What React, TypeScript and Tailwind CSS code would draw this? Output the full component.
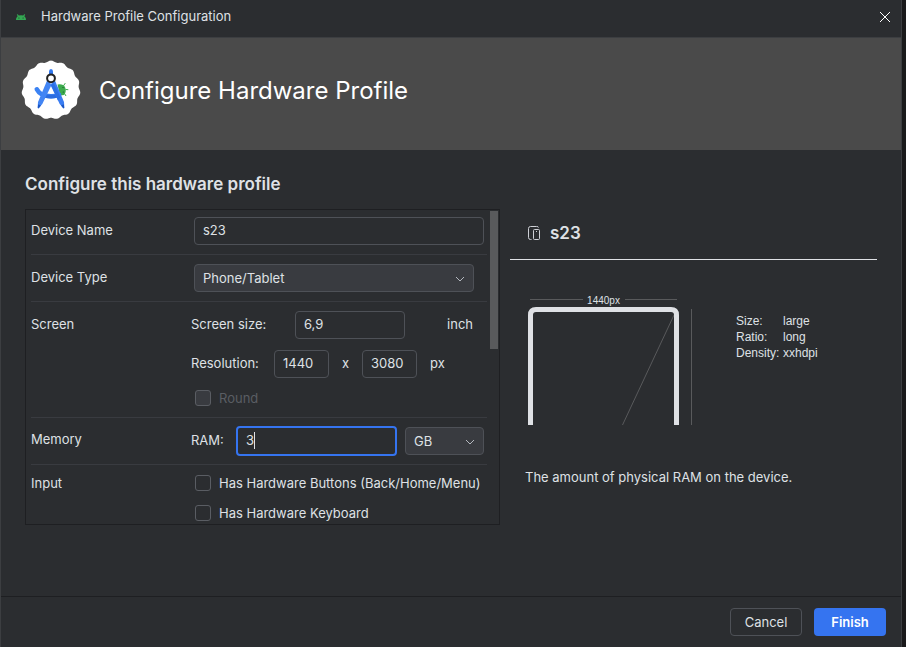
import { useId, type ReactNode } from 'react';

const controlBase =
  'h-7 rounded border border-[#4e5157] px-2 text-[#dfe1e5] outline-none';

function AndroidHead() {
  return (
    <svg className="h-3 w-3" viewBox="0 0 12 12" aria-hidden="true">
      <path
        d="M1 9a5 4.500 0 0 1 1.600-3.800L1.800 3.600l1-.4 1 1.400a6 6 0 0 1 4.400 0l1-1.400 1 .4-.8 1.600A5 4.500 0 0 1 11 9z"
        fill="#33a852"
      />
      <circle cx="3.900" cy="7" r=".6" fill="#2b2d30" />
      <circle cx="8.100" cy="7" r=".6" fill="#2b2d30" />
    </svg>
  );
}

function scallop(cx: number, cy: number, r: number, amp: number, lobes: number) {
  const points: string[] = [];
  for (let i = 0; i < 240; i++) {
    const a = (i / 240) * Math.PI * 2 - Math.PI / 2;
    const rr = r + amp * Math.cos(lobes * (a + Math.PI / 2));
    points.push(`${(cx + rr * Math.cos(a)).toFixed(2)},${(cy + rr * Math.sin(a)).toFixed(2)}`);
  }
  return points.join(' ');
}

function StudioLogo() {
  return (
    <svg className="size-[60px] shrink-0" viewBox="0 0 60 60" aria-hidden="true">
      <polygon points={scallop(30, 30, 28.6, 0.8, 15)} fill="#fff" />
      <path d="M36.500 24.500q5.500-1 7.500 2.500 2 4.500-1 8l-4 .5z" fill="#3dab4e" />
      <path d="M42.500 25.800l1.800-2.700M44.500 29.500l2.800.2M43.500 33.500l1.500 2.500" stroke="#3dab4e" strokeWidth="1" fill="none" />
      <circle cx="42" cy="27.500" r=".6" fill="#174d24" />
      <circle cx="42.300" cy="32" r=".6" fill="#174d24" />
      <path d="M15.800 29.300q3.500 7 14.200 7 5 0 8-1.500" fill="none" stroke="#3b82f3" strokeWidth="4.600" strokeLinecap="round" />
      <path d="M24.500 34.200q5.500 1.300 11 0l1.200 3.300q-6.700 2.200-13.400 0z" fill="#2b6cdf" />
      <path d="M28 11.500q0-2.500 2-2.500t2 2.500V16h-4z" fill="#2f76ee" />
      <path d="M26.500 19.500l4 5.500-9.200 19-3.700 4.300-.9-.8.3-5.500z" fill="#4285f4" />
      <path d="M33.500 19.500l-4 5.500 9.200 19 3.700 4.300.9-.8-.3-5.500z" fill="#3a7df2" />
      <path d="M30 25l2.800-1.800 6.700 14-2.500 3.300z" fill="#2d70e4" />
      <path d="M17.200 44.200l2.800 1.300-2.400 2.900-.9-.4zM42.800 44.200l-2.800 1.300 2.400 2.900.9-.4z" fill="#1a56c4" />
      <circle cx="30" cy="18.300" r="3.900" fill="#fff" stroke="#222" strokeWidth="2" />
    </svg>
  );
}

function Chevron() {
  return (
    <svg
      className="pointer-events-none absolute top-1/2 right-2 h-3 w-3 -translate-y-1/2"
      viewBox="0 0 12 12"
      fill="none"
      stroke="#b4b8bf"
      aria-hidden="true"
    >
      <path d="M2 5 6 9l4-4" />
    </svg>
  );
}

function Select({ label, value, className }: { label: string; value: string; className: string }) {
  return (
    <div className={`relative ${className}`}>
      <select
        aria-label={label}
        defaultValue={value}
        className={`${controlBase} w-full appearance-none bg-[#393b40]`}
      >
        <option>{value}</option>
      </select>
      <Chevron />
    </div>
  );
}

function CheckItem({ label, disabled }: { label: string; disabled?: boolean }) {
  const id = useId();
  return (
    <div className="flex h-4 items-center gap-2 pl-1">
      <input
        id={id}
        type="checkbox"
        disabled={disabled}
        className="size-4 appearance-none rounded-[3px] border border-[#5a5d63] disabled:bg-[#393b40]"
      />
      <label htmlFor={id} className={disabled ? 'whitespace-nowrap text-[#5a5d63]' : 'whitespace-nowrap'}>
        {label}
      </label>
    </div>
  );
}

function Row({ title, className, children }: { title: string; className: string; children: ReactNode }) {
  return (
    <section className={`flex border-b border-[#393b40] last:border-b-0 ${className}`}>
      <h3 className="flex h-[26px] w-40 shrink-0 items-center">{title}</h3>
      <div className="min-w-0 flex-1">{children}</div>
    </section>
  );
}

function HardwareForm() {
  return (
    <form className="mt-[13px] flex h-79 overflow-hidden border border-[#1e1f22] pr-px pl-[5px]">
      <div className="flex-1">
        <Row title="Device Name" className="pt-[7px] pb-[9px]">
          <div className="pr-[3px] pl-[3px]">
            <input aria-label="Device Name" defaultValue="s23" className={`${controlBase} w-full pb-0.5`} />
          </div>
        </Row>
        <Row title="Device Type" className="pt-[9px] pb-[9px]">
          <div className="pr-[13px] pl-[3px]">
            <Select label="Device Type" value="Phone/Tablet" className="w-full" />
          </div>
        </Row>
        <Row title="Screen" className="pt-[9px] pb-[11px]">
          <div className="flex items-center">
            <label htmlFor="size" className="w-26 pb-0.5">Screen size:</label>
            <input id="size" defaultValue="6,9" className={`${controlBase} w-[110px] pb-0.5`} />
            <span className="ml-auto pr-[14px] pb-0.5">inch</span>
          </div>
          <div className="mt-[11px] flex items-center">
            <label htmlFor="width" className="w-[83px] pb-0.5">Resolution:</label>
            <input id="width" defaultValue="1440" className={`${controlBase} w-[55px] pb-0.5`} />
            <span className="w-[33px] pb-0.5 text-center">x</span>
            <input aria-label="Height" defaultValue="3080" className={`${controlBase} w-[55px] pb-0.5`} />
            <span className="ml-[13px] pb-0.5">px</span>
          </div>
          <div className="mt-3">
            <CheckItem label="Round" disabled />
          </div>
        </Row>
        <Row title="Memory" className="pt-2 pb-2">
          <div className="flex items-center">
            <label htmlFor="ram" className="w-[45px] pb-0.5">RAM:</label>
            <div className="relative min-w-0 flex-1">
              <input
                id="ram"
                defaultValue="3"
                className="h-[30px] w-full rounded border-2 border-[#3574f0] px-2 pb-0.5 text-[#dfe1e5] outline-none"
              />
              <span className="absolute top-[6px] left-[18px] h-[17px] w-px bg-[#dfe1e5]" />
            </div>
            <Select label="Memory unit" value="GB" className="mr-[3px] ml-2 w-[79px]" />
          </div>
        </Row>
        <Row title="Input" className="pt-[5px]">
          <div className="flex flex-col gap-[14px] pt-[5px]">
            <CheckItem label="Has Hardware Buttons (Back/Home/Menu)" />
            <CheckItem label="Has Hardware Keyboard" />
          </div>
        </Row>
      </div>
      <div className="ml-[3px] w-2 shrink-0 pt-px">
        <div className="h-[138px] bg-[#595a5c]" />
      </div>
    </form>
  );
}

function ScreenDiagram() {
  return (
    <svg className="h-[130px] w-[165px] shrink-0" viewBox="0 0 165 130" role="img" aria-label="Screen preview">
      <path d="M2 4.500h53M97 4.500h52M163.500 14v116" stroke="#595a5c" fill="none" />
      <text x="75.500" y="9" textAnchor="middle" fill="#dfe1e5" className="font-['Liberation_Sans',Arial,sans-serif] text-[10px]">
        1440px
      </text>
      <path d="M146 20 94.500 130" stroke="#595a5c" />
      <path d="M2.500 130V20q0-5.500 5.500-5.500h135q5.500 0 5.500 5.500v110" fill="none" stroke="#dfe1e5" strokeWidth="5" />
    </svg>
  );
}

function Preview() {
  const stats = [
    ['Size:', 'large'],
    ['Ratio:', 'long'],
    ['Density:', 'xxhdpi'],
  ];
  return (
    <aside className="ml-2.5 min-w-0 flex-1 pt-[49px]">
      <div className="flex items-center gap-2.5 border-b border-[#dfe1e5] pb-[14px] pl-[18px]">
        <svg className="h-3.5 w-3" viewBox="0 0 12 14" fill="none" stroke="#ced0d6" aria-hidden="true">
          <path d="M3.500 13.500h-1q-2 0-2-2v-9q0-2 2-2h6q2 0 2 1" />
          <rect x="5.500" y="3.500" width="6" height="10" rx="1" />
          <path d="M8 5.500h1" />
        </svg>
        <h2 className="text-[17px] leading-6 font-semibold">s23</h2>
      </div>
      <div className="mt-[35px] flex pl-[18px]">
        <ScreenDiagram />
        <dl className="mt-[18px] ml-[43px] grid h-12 grid-cols-[47px_auto] font-['Liberation_Sans',Arial,sans-serif] text-xs leading-4">
          {stats.map(([name, value]) => (
            <div key={name} className="contents">
              <dt>{name}</dt>
              <dd>{value}</dd>
            </div>
          ))}
        </dl>
      </div>
      <p className="mt-[42px] pl-[15px]">The amount of physical RAM on the device.</p>
    </aside>
  );
}

export default function App() {
  return (
    <div className="min-h-screen bg-[#1a1a1b] pr-1 font-[Inter,sans-serif] text-[13px] leading-5 text-[#dfe1e5]">
      <div className="flex min-h-screen flex-col border-x border-[#3c3e41] bg-[#2b2d30]">
        <header className="flex h-[38px] shrink-0 items-center border-b border-[#3c3e41] pr-2.5 pb-1 pl-[14px]">
          <AndroidHead />
          <span className="ml-[14px] pb-0.5">Hardware Profile Configuration</span>
          <button type="button" aria-label="Close" className="ml-auto">
            <svg className="h-3 w-3" viewBox="0 0 12 12" stroke="#fff" aria-hidden="true">
              <path d="m1 1 10 10M11 1 1 11" />
            </svg>
          </button>
        </header>
        <div className="flex h-28 shrink-0 items-center gap-[18px] bg-[#4a4a4a] pb-2 pl-5">
          <StudioLogo />
          <h1 className="pt-0.5 text-2xl text-white">Configure Hardware Profile</h1>
        </div>
        <main className="flex flex-1 px-6 pt-[22px] pb-6">
          <div className="w-[475px] shrink-0">
            <h2 className="text-[17px] leading-6 font-semibold">Configure this hardware profile</h2>
            <HardwareForm />
          </div>
          <Preview />
        </main>
        <footer className="flex h-[51px] shrink-0 justify-end gap-3 border-t border-[#1e1f22] pt-[11px] pr-[15px]">
          <button type="button" className="h-7 w-[72px] rounded border border-[#4e5157]">
            Cancel
          </button>
          <button type="submit" className="h-7 w-[72px] rounded bg-[#3574f0] font-semibold text-white">
            Finish
          </button>
        </footer>
      </div>
    </div>
  );
}
